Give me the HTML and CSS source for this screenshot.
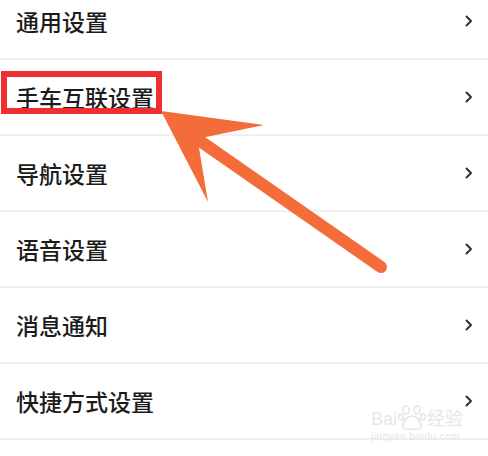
FILE: index.html
```html
<!DOCTYPE html>
<html lang="zh-CN">
<head>
    <meta charset="UTF-8">
    <meta name="viewport" content="width=device-width, initial-scale=1.0">
    <title>设置</title>
    <link rel="stylesheet" href="styles.css">
</head>
<body>

<div class="page">
    <ul class="menu">
        <li class="item"><span class="label">通用设置</span><svg class="chevron" viewBox="0 0 8 12"><path d="M1.5 1.5 L6 6 L1.5 10.5"/></svg></li>
        <li class="item"><span class="label">手车互联设置</span><svg class="chevron" viewBox="0 0 8 12"><path d="M1.5 1.5 L6 6 L1.5 10.5"/></svg></li>
        <li class="item"><span class="label">导航设置</span><svg class="chevron" viewBox="0 0 8 12"><path d="M1.5 1.5 L6 6 L1.5 10.5"/></svg></li>
        <li class="item"><span class="label">语音设置</span><svg class="chevron" viewBox="0 0 8 12"><path d="M1.5 1.5 L6 6 L1.5 10.5"/></svg></li>
        <li class="item"><span class="label">消息通知</span><svg class="chevron" viewBox="0 0 8 12"><path d="M1.5 1.5 L6 6 L1.5 10.5"/></svg></li>
        <li class="item"><span class="label">快捷方式设置</span><svg class="chevron" viewBox="0 0 8 12"><path d="M1.5 1.5 L6 6 L1.5 10.5"/></svg></li>
    </ul>

    <!-- annotation: red frame + arrow -->
    <div class="highlight"></div>
    <svg class="arrow" viewBox="0 0 488 456" width="488" height="456">
        <line x1="203" y1="143" x2="381" y2="267" stroke="#f36c39" stroke-width="12" stroke-linecap="round"/>
        <polygon points="161,111 264,125 206,137 199,148 208,202" fill="#f36c39"/>
    </svg>

    <div class="watermark">
        <div class="wm-logo">Bai<svg class="wm-paw" viewBox="0 0 28 26" width="28" height="26"><g fill="none" stroke="#e4e4e4" stroke-width="1.5"><ellipse cx="8" cy="5" rx="3" ry="4"/><ellipse cx="19" cy="5" rx="3" ry="4"/><ellipse cx="3" cy="12" rx="2.5" ry="3"/><ellipse cx="25" cy="12" rx="2.5" ry="3"/><path d="M5 22 C5 15 10 11 14 11 C18 11 23 15 23 22 C23 25 5 25 5 22 Z"/></g></svg>经验</div>
        <div class="wm-url">jingyan.baidu.com</div>
    </div>
</div>

</body>
</html>
```

FILE: styles.css
```css
/* page */
body {
    margin: 0;
    background: #fff;
    font-family: "Noto Sans CJK SC", "Noto Sans", sans-serif;
}

.page {
    position: relative;
    width: 488px;
    height: 456px;
    overflow: hidden;
}

/* settings list */
.menu {
    list-style: none;
    margin: -16px 0 0 0;
    padding: 0;
}

.item {
    display: flex;
    align-items: center;
    justify-content: space-between;
    height: 74px;
    padding: 0 15px 0 16px;
    border-bottom: 2px solid #f0f0f0;
}

.label {
    font-size: 23px;
    font-weight: 500;
    color: #1c1c1c;
}

.chevron {
    width: 8px;
    height: 12px;
    fill: none;
    stroke: #333;
    stroke-width: 2;
    stroke-linecap: round;
    stroke-linejoin: round;
}

/* red frame around the target row */
.highlight {
    position: absolute;
    left: 1px;
    top: 71px;
    width: 149px;
    height: 31px;
    border: 6px solid #ef2f2f;
}

.arrow {
    position: absolute;
    left: 0;
    top: 0;
}

/* baidu watermark */
.watermark {
    position: absolute;
    left: 371px;
    top: 405px;
    color: #e6e6e6;
    font-family: "Liberation Sans", "Noto Sans CJK SC", sans-serif;
}

.wm-logo {
    display: flex;
    align-items: flex-end;
    font-size: 18px;
    line-height: 24px;
}

.wm-paw {
    margin: 0 1px;
}

.wm-url {
    font-size: 10px;
    line-height: 12px;
    letter-spacing: 0.5px;
}
```
